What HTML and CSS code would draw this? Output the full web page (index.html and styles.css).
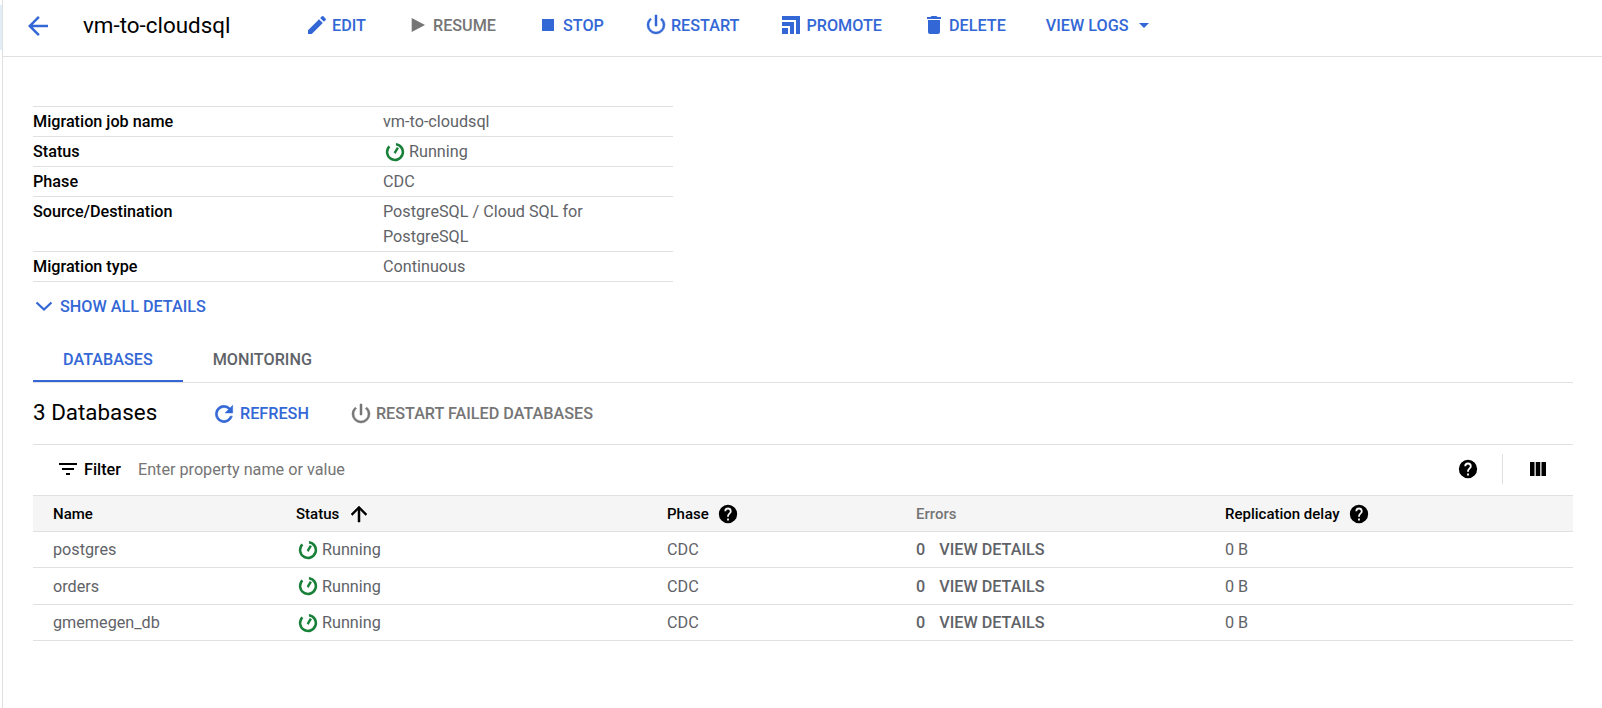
FILE: index.html
```html
<!DOCTYPE html>
<html lang="en">
<head>
  <meta charset="UTF-8">
  <title>vm-to-cloudsql</title>
  <link rel="stylesheet" href="styles.css">
</head>
<body>

  <div class="edge"><span class="edge-mark"></span></div>

  <div class="page">
    <header class="toolbar">
      <svg class="back" viewBox="0 0 24 24"><path d="M20 11H7.83l5.59-5.59L12 4l-8 8 8 8 1.41-1.41L7.83 13H20z"/></svg>
      <h1 class="job-title">vm-to-cloudsql</h1>
      <div class="actions">
        <a class="action"><svg viewBox="0 0 24 24"><path d="M3 17.25V21h3.75L17.81 9.94l-3.75-3.75L3 17.25zM20.71 7.04a1 1 0 0 0 0-1.41l-2.34-2.34a1 1 0 0 0-1.41 0l-1.83 1.83 3.75 3.75 1.83-1.83z"/></svg>Edit</a>
        <a class="action off"><svg viewBox="0 0 24 24"><path d="M5.700 5v14L19 12z"/></svg>Resume</a>
        <a class="action"><svg viewBox="0 0 24 24"><path d="M6 6h12v12H6z"/></svg>Stop</a>
        <a class="action"><svg class="bold" viewBox="0 0 24 24"><path d="M13 2h-2v11h2V2zm4.83 3.17-1.42 1.42A6.92 6.92 0 0 1 19 12a7 7 0 0 1-14 0c0-2.17 1-4.1 2.58-5.42L6.17 5.17A8.93 8.93 0 0 0 3 12a9 9 0 0 0 18 0c0-2.74-1.23-5.18-3.17-6.83z"/></svg>Restart</a>
        <a class="action"><svg viewBox="0 0 24 24"><path d="M3 3h18v18h-4V7H3zM3 9h12v12h-4V13H3zM3 15h6v6H3z"/></svg>Promote</a>
        <a class="action"><svg viewBox="0 0 24 24"><path d="M6 19c0 1.1.9 2 2 2h8c1.1 0 2-.9 2-2V7H6v12zM19 4h-3.5l-1-1h-5l-1 1H5v2h14V4z"/></svg>Delete</a>
        <a class="action">View logs<svg class="caret" viewBox="0 0 10 5"><path d="M0 0l5 5 5-5z"/></svg></a>
      </div>
    </header>

    <main class="content">
      <table class="details">
        <tr><th>Migration job name</th><td>vm-to-cloudsql</td></tr>
        <tr><th>Status</th><td><span class="status"><svg viewBox="0 0 24 24"><use href="#running"/></svg>Running</span></td></tr>
        <tr><th>Phase</th><td>CDC</td></tr>
        <tr><th>Source/Destination</th><td>PostgreSQL / Cloud SQL for PostgreSQL</td></tr>
        <tr><th>Migration type</th><td>Continuous</td></tr>
      </table>

      <a class="show-all"><svg viewBox="0 0 18 10"><path d="M1.500 1.500 9 8.500l7.500-7"/></svg>Show all details</a>

      <nav class="tabs">
        <a class="tab active">Databases</a>
        <a class="tab">Monitoring</a>
      </nav>

      <div class="db-head">
        <h2>3 Databases</h2>
        <a class="action act-refresh"><svg class="bold" viewBox="0 0 24 24"><path d="M17.65 6.35A7.95 7.95 0 0 0 12 4a8 8 0 1 0 7.73 10h-2.08A6 6 0 1 1 12 6c1.66 0 3.14.69 4.22 1.78L13 11h7V4l-2.35 2.35z"/></svg>Refresh</a>
        <a class="action off"><svg class="bold" viewBox="0 0 24 24"><path d="M13 2h-2v11h2V2zm4.83 3.17-1.42 1.42A6.92 6.92 0 0 1 19 12a7 7 0 0 1-14 0c0-2.17 1-4.1 2.58-5.42L6.17 5.17A8.93 8.93 0 0 0 3 12a9 9 0 0 0 18 0c0-2.74-1.23-5.18-3.17-6.83z"/></svg>Restart failed databases</a>
      </div>

      <div class="filter-bar">
        <svg class="filter-icon" viewBox="0 0 24 24"><path d="M10 18h4v-2h-4v2zM3 6v2h18V6H3zm3 7h12v-2H6v2z"/></svg>
        <span class="filter-label">Filter</span>
        <span class="filter-hint">Enter property name or value</span>
        <svg class="help" viewBox="0 0 24 24"><use href="#help"/></svg>
        <span class="filter-sep"></span>
        <svg class="columns" viewBox="0 0 24 24"><path d="M4 5h4.500v14H4zM9.750 5h4.500v14h-4.500zM15.500 5H20v14h-4.500z"/></svg>
      </div>

      <table class="databases">
        <colgroup>
          <col class="c-name"><col class="c-status"><col class="c-phase"><col class="c-errors"><col>
        </colgroup>
        <thead>
          <tr>
            <th>Name</th>
            <th><span class="th-in">Status<svg class="sort bold" viewBox="0 0 24 24"><path d="M4 12l1.410 1.410L11 7.830V20h2V7.830l5.580 5.590L20 12l-8-8z"/></svg></span></th>
            <th><span class="th-in">Phase<svg class="help" viewBox="0 0 24 24"><use href="#help"/></svg></span></th>
            <th class="muted">Errors</th>
            <th><span class="th-in">Replication delay<svg class="help" viewBox="0 0 24 24"><use href="#help"/></svg></span></th>
          </tr>
        </thead>
        <tbody>
          <tr>
            <td>postgres</td>
            <td><span class="status"><svg viewBox="0 0 24 24"><use href="#running"/></svg>Running</span></td>
            <td>CDC</td>
            <td><b class="err-count">0</b><a class="view-details">View details</a></td>
            <td>0 B</td>
          </tr>
          <tr>
            <td>orders</td>
            <td><span class="status"><svg viewBox="0 0 24 24"><use href="#running"/></svg>Running</span></td>
            <td>CDC</td>
            <td><b class="err-count">0</b><a class="view-details">View details</a></td>
            <td>0 B</td>
          </tr>
          <tr>
            <td>gmemegen_db</td>
            <td><span class="status"><svg viewBox="0 0 24 24"><use href="#running"/></svg>Running</span></td>
            <td>CDC</td>
            <td><b class="err-count">0</b><a class="view-details">View details</a></td>
            <td>0 B</td>
          </tr>
        </tbody>
      </table>
    </main>
  </div>

  <!-- shared icons -->
  <svg class="sprites" aria-hidden="true">
    <symbol id="help" viewBox="0 0 24 24"><path d="M12 2a10 10 0 1 0 0 20 10 10 0 0 0 0-20zm1 17h-2v-2h2v2zm2.070-7.750-.9.920C13.450 12.900 13 13.500 13 15h-2v-.5c0-1.100.450-2.100 1.170-2.830l1.240-1.260c.370-.360.590-.860.590-1.410a2 2 0 0 0-4 0H8a4 4 0 0 1 8 0c0 .880-.360 1.680-.930 2.250z"/></symbol>
    <symbol id="running" viewBox="0 0 24 24"><path d="M13 2.050A10 10 0 1 1 4.930 4.930L6.900 6.900A7.200 7.200 0 1 0 13 4.900z"/><path d="M10.600 12.400 14 6.500l2.300 1.400-3.800 6.300z"/></symbol>
  </svg>

</body>
</html>
```
FILE: styles.css
```css
* {
  box-sizing: border-box;
}

html, body {
  height: 100%;
}

body {
  display: flex;
  margin: 0;
  font-family: Roboto, Arial, sans-serif;
  font-size: 16.2px;
  color: #5f6368;
  background-color: #fff;
  overflow: hidden;
}

svg {
  fill: currentColor;
  flex: none;
}

svg.bold {
  stroke: currentColor;
  stroke-width: 0.5;
}

.sprites {
  display: none;
}

/* strip on the far left, what is left of the side nav */
.edge {
  width: 2px;
  flex: none;
}

.edge-mark {
  display: block;
  height: 45px;
  margin-top: 5px;
  background-color: #e3edf8;
}

.page {
  flex: 1;
  min-width: 0;
  border-left: 1px solid #e0e0e0;
}

/* top bar */
.toolbar {
  display: flex;
  align-items: center;
  height: 57px;
  padding: 0 0 6px 20px;
  border-bottom: 1px solid #e0e0e0;
}

.back {
  width: 30px;
  height: 30px;
  margin-top: 2px;
  color: #3367d6;
}

.job-title {
  width: 222px;
  margin: 0 0 0 30px;
  font-size: 22.4px;
  font-weight: 400;
  color: #000;
}

.actions {
  display: flex;
  align-items: center;
  gap: 40px;
}

.action {
  display: inline-flex;
  align-items: center;
  font-weight: 500;
  text-transform: uppercase;
  color: #3367d6;
  white-space: nowrap;
}

.action svg {
  width: 24px;
  height: 24px;
  margin-right: 3px;
}

.action.off {
  color: #757575;
}

.action .caret {
  width: 10px;
  height: 5px;
  margin: 0 0 0 11px;
}

/* details */
.content {
  padding: 49px 29px 0 30px;
}

.details {
  width: 640px;
  border-collapse: collapse;
  border-top: 1px solid #e0e0e0;
}

.details th, .details td {
  padding: 2px 0;
  line-height: 25px;
  text-align: left;
  vertical-align: top;
  border-bottom: 1px solid #e0e0e0;
}

.details th {
  width: 350px;
  font-weight: 500;
  color: #000;
}

.details td {
  padding-right: 30px;
}

.status {
  display: flex;
  align-items: center;
}

.status svg {
  width: 22px;
  height: 22px;
  margin: 0 3.5px 0 0.5px;
  color: #188038;
}

.show-all {
  display: flex;
  align-items: center;
  height: 24px;
  margin-top: 12px;
  font-weight: 500;
  text-transform: uppercase;
  color: #3367d6;
}

.show-all svg {
  width: 18px;
  height: 10px;
  margin: 0 7px 0 2px;
  fill: none;
  stroke: currentColor;
  stroke-width: 2.2;
}

/* tabs */
.tabs {
  display: flex;
  margin-top: 18px;
  border-bottom: 1px solid #e0e0e0;
}

.tab {
  height: 46px;
  padding: 0 30px;
  line-height: 48px;
  font-weight: 500;
  text-transform: uppercase;
  color: #5f6368;
}

.tab.active {
  color: #3367d6;
  border-bottom: 2px solid #3367d6;
}

.db-head {
  display: flex;
  align-items: center;
  gap: 40px;
  height: 62px;
  border-bottom: 1px solid #e0e0e0;
}

.db-head h2 {
  width: 138px;
  margin: 0 0 4px;
  font-size: 22.4px;
  font-weight: 400;
  white-space: nowrap;
  color: #000;
}

.act-refresh svg {
  width: 26px;
  height: 26px;
}

/* filter row */
.filter-bar {
  display: flex;
  align-items: center;
  height: 50px;
  padding: 0 0 2px 23px;
}

.filter-icon {
  width: 24px;
  height: 24px;
  color: #000;
}

.filter-label {
  margin-left: 4px;
  font-weight: 500;
  color: #000;
}

.filter-hint {
  flex: 1;
  margin-left: 17px;
  color: #757575;
}

.help {
  width: 22px;
  height: 22px;
  color: #000;
}

.filter-sep {
  width: 1px;
  height: 30px;
  margin: 0 23px;
  background-color: #e0e0e0;
}

.columns {
  width: 24px;
  height: 24px;
  margin-right: 23px;
  color: #000;
}

/* databases table */
.databases {
  width: 100%;
  table-layout: fixed;
  border-collapse: collapse;
}

.c-name { width: 243px; }
.c-status { width: 371px; }
.c-phase { width: 249px; }
.c-errors { width: 309px; }

.databases th, .databases td {
  height: 36px;
  padding: 0 0 0 20px;
  text-align: left;
  border-bottom: 1px solid #e0e0e0;
}

.databases tbody tr:nth-child(2) td {
  height: 37px;
}

.databases th {
  font-size: 15px;
  font-weight: 500;
  color: #000;
  background-color: #f5f5f5;
  border-top: 1px solid #e0e0e0;
}

.databases th.muted {
  color: #757575;
}

.th-in {
  display: inline-flex;
  align-items: center;
}

.th-in .help {
  margin-left: 8px;
}

.sort {
  width: 24px;
  height: 24px;
  margin-left: 8px;
  color: #000;
}

.err-count {
  font-weight: 500;
}

.view-details {
  margin-left: 14px;
  font-weight: 500;
  text-transform: uppercase;
  color: #5f6368;
}
```
